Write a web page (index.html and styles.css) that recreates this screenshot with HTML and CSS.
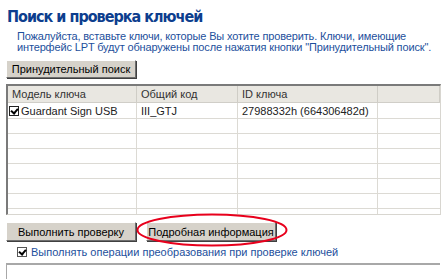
FILE: index.html
```html
<!DOCTYPE html>
<html lang="ru">
<head>
  <meta charset="UTF-8" />
  <title>Поиск и проверка ключей</title>
  <link rel="stylesheet" href="styles.css">
</head>
<body>
  <div class="page">
    <h1 class="title">Поиск и проверка ключей</h1>
    <p class="hint">Пожалуйста, вставьте ключи, которые Вы хотите проверить. Ключи, имеющие<br>интерфейс LPT будут обнаружены после нажатия кнопки "Принудительный поиск".</p>

    <button class="btn btn-search">Принудительный поиск</button>

    <div class="grid">
      <div class="row head">
        <div class="cell">Модель ключа</div>
        <div class="cell">Общий код</div>
        <div class="cell">ID ключа</div>
        <div class="cell"></div>
      </div>
      <div class="row first">
        <div class="cell"><span class="check"></span>Guardant Sign USB</div>
        <div class="cell">III_GTJ</div>
        <div class="cell">27988332h (664306482d)</div>
        <div class="cell"></div>
      </div>
      <div class="row"><div class="cell"></div><div class="cell"></div><div class="cell"></div><div class="cell"></div></div>
      <div class="row"><div class="cell"></div><div class="cell"></div><div class="cell"></div><div class="cell"></div></div>
      <div class="row"><div class="cell"></div><div class="cell"></div><div class="cell"></div><div class="cell"></div></div>
      <div class="row"><div class="cell"></div><div class="cell"></div><div class="cell"></div><div class="cell"></div></div>
      <div class="row"><div class="cell"></div><div class="cell"></div><div class="cell"></div><div class="cell"></div></div>
      <div class="row"><div class="cell"></div><div class="cell"></div><div class="cell"></div><div class="cell"></div></div>
      <div class="row"><div class="cell"></div><div class="cell"></div><div class="cell"></div><div class="cell"></div></div>
    </div>

    <div class="actions">
      <button class="btn btn-check">Выполнить проверку</button>
      <div class="marked">
        <button class="btn btn-info">Подробная информация</button>
        <svg class="ring" width="154" height="36" viewBox="0 0 154 36">
          <ellipse cx="77" cy="17" rx="74.5" ry="15.5" fill="none" stroke="#e8001c" stroke-width="2"/>
        </svg>
      </div>
    </div>

    <label class="option"><span class="check small"></span>Выполнять операции преобразования при проверке ключей</label>

    <div class="log"></div>
  </div>
</body>
</html>
```

FILE: styles.css
```css
html, body {
  overflow: hidden;
}

body {
  margin: 0;
  background: #fff;
  font-family: "Liberation Sans", Arial, sans-serif;
  font-size: 11px;
}

.page {
  height: 279px;
  padding: 8px 5px 0 6px;
  box-sizing: border-box;
  overflow: hidden;
}

.title {
  margin: 0 0 5px 1px;
  font-family: "DejaVu Sans Condensed", "DejaVu Sans", Verdana, sans-serif;
  font-size: 16px;
  line-height: 18px;
  font-weight: bold;
  color: #0d3e8e;
  letter-spacing: -1px;
  white-space: nowrap;
}

.hint {
  margin: 0 0 7px 11px;
  line-height: 11px;
  color: #1d4f9c;
  white-space: nowrap;
  letter-spacing: -0.15px;
}

.btn {
  display: block;
  margin: 0;
  padding: 0;
  font-family: "Liberation Sans", Arial, sans-serif;
  font-size: 11px;
  color: #000;
  background: #d6d2ca;
  border: 1px solid;
  border-color: #fff #6e6e6e #6e6e6e #fff;
  box-shadow: 1px 1px 0 #404040;
  cursor: pointer;
}

.btn-search {
  width: 130px;
  height: 18px;
  margin-bottom: 6px;
}

.grid {
  width: 432px;
  height: 128px;
  overflow: hidden;
  border-top: 2px solid #7a7a7a;
  border-left: 2px solid #7a7a7a;
  border-right: 1px solid #d8d6d0;
  border-bottom: 1px solid #d8d6d0;
}

.row {
  display: grid;
  grid-template-columns: 129px 101px 140px 1fr;
  height: 14px;
  border-bottom: 1px solid #dcdad4;
}

.row.head {
  height: 16px;
  background: #e9e7e1;
  border-bottom: 1px solid #d0cec8;
}

.row.first {
  height: 15px;
}

.cell {
  display: flex;
  align-items: center;
  padding-left: 4px;
  border-right: 1px solid #dcdad4;
  color: #222;
  white-space: nowrap;
}

.cell:last-child {
  border-right: none;
}

.head .cell {
  border-right: 1px solid #cfcdc6;
  color: #333;
}

.first .cell:first-child {
  padding-left: 1px;
}

.check {
  display: inline-block;
  box-sizing: border-box;
  width: 10px;
  height: 10px;
  margin-right: 2px;
  border: 1px solid #222;
  background: #fff;
  position: relative;
}

.check::after {
  content: "";
  position: absolute;
  left: 2px;
  top: 0;
  width: 3px;
  height: 5px;
  border: solid #000;
  border-width: 0 2px 2px 0;
  transform: rotate(40deg);
}

.check.small {
  border-color: #555;
  margin: 0 4px 0 11px;
}

.actions {
  display: flex;
  align-items: flex-start;
  margin-top: 7px;
}

.btn-check {
  width: 130px;
  height: 19px;
}

.marked {
  position: relative;
  margin-left: 10px;
}

.btn-info {
  width: 130px;
  height: 19px;
}

.ring {
  position: absolute;
  left: -11px;
  top: -9px;
  pointer-events: none;
}

.option {
  display: flex;
  align-items: center;
  height: 12px;
  margin-top: 5px;
  color: #1d4f9c;
}

.log {
  height: 40px;
  margin-top: 5px;
  border-top: 2px solid #a8a8a8;
  border-left: 1px solid #a8a8a8;
}
```
